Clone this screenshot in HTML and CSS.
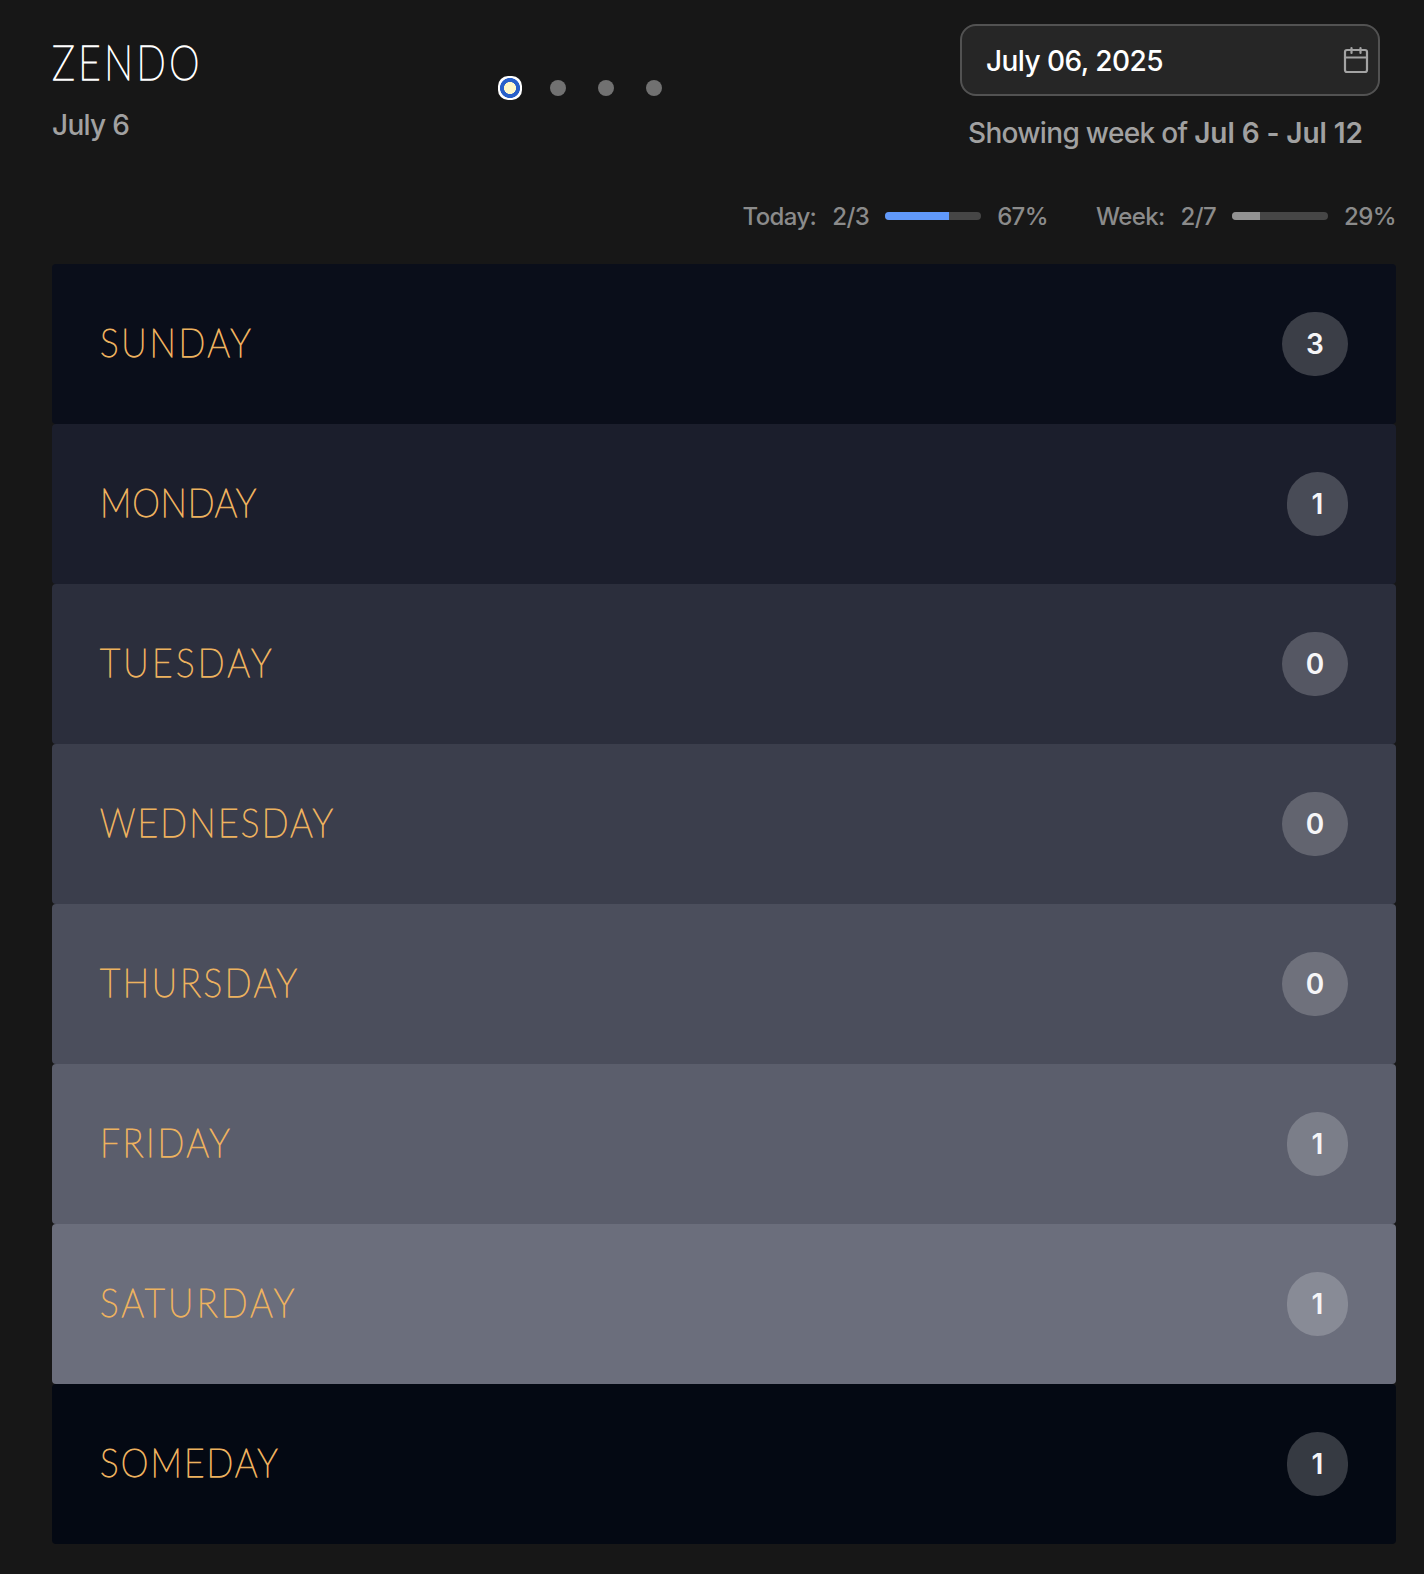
FILE: index.html
```html
<!DOCTYPE html>
<html lang="en">
<head>
<meta charset="utf-8">
<title>Zendo</title>
<link rel="stylesheet" href="styles.css">
</head>
<body>
<div class="app">
  <header class="header">
    <div class="brand">
      <h1 class="logo">ZENDO</h1>
      <p class="date">July 6</p>
    </div>
    <nav class="dots">
      <span class="dot dot-active"></span><span class="dot"></span><span class="dot"></span><span class="dot"></span>
    </nav>
    <div class="picker">
      <div class="field">
        <span>July 06, 2025</span>
        <svg width="28" height="28" viewBox="0 0 28 28" fill="none" stroke="#a3a3a3" stroke-width="2.2" stroke-linecap="round" stroke-linejoin="round"><rect x="3" y="4" width="22" height="22" rx="2"/><path d="M3 11.5h22M9.5 2v5M18.5 2v5"/></svg>
      </div>
      <p class="range">Showing week of <b>Jul 6 - Jul 12</b></p>
    </div>
  </header>
  <section class="stats">
    <div class="stat"><span>Today:</span><span>2/3</span><div class="bar"><div class="fill fill-today" style="width:67%"></div></div><span>67%</span></div>
    <div class="stat"><span>Week:</span><span>2/7</span><div class="bar"><div class="fill" style="width:29%"></div></div><span>29%</span></div>
  </section>
  <main class="days">
    <div class="day sunday"><h2>SUNDAY</h2><span class="count">3</span></div>
    <div class="day monday"><h2>MONDAY</h2><span class="count">1</span></div>
    <div class="day tuesday"><h2>TUESDAY</h2><span class="count">0</span></div>
    <div class="day wednesday"><h2>WEDNESDAY</h2><span class="count">0</span></div>
    <div class="day thursday"><h2>THURSDAY</h2><span class="count">0</span></div>
    <div class="day friday"><h2>FRIDAY</h2><span class="count">1</span></div>
    <div class="day saturday"><h2>SATURDAY</h2><span class="count">1</span></div>
    <div class="day someday"><h2>SOMEDAY</h2><span class="count">1</span></div>
  </main>
</div>
</body>
</html>
```
FILE: styles.css
```css
* { box-sizing: border-box; margin: 0; padding: 0; }
body { background: #171717; color: #fff; font-family: Inter, "Liberation Sans", sans-serif; }
.app { padding: 24px 28px 30px 52px; }
.header { display: flex; height: 168px; }
.brand { width: 446px; padding-top: 10px; }
.logo { width: max-content; font-family: Lato, sans-serif; font-weight: 200; font-size: 48px; line-height: 56px; letter-spacing: 4.4px; -webkit-text-stroke: 1.5px currentColor; transform: scaleX(.8); transform-origin: left; }
.date { font-size: 28px; line-height: 40px; letter-spacing: -.7px; color: #a1a1a1; margin-top: 15px; }
.dots { display: flex; gap: 32px; width: 462px; height: 24px; margin-top: 52px; align-items: center; }
.dot { width: 16px; height: 16px; border-radius: 50%; background: #717171; }
.dot-active { width: 24px; height: 24px; margin-right: -4px; border-radius: 10px; background: radial-gradient(circle, #fef7c8 5.7px, #2860ca 6.3px, #2860ca 9.7px, #fff 10.3px); }
.picker { width: 420px; }
.field { display: flex; justify-content: space-between; align-items: center; height: 72px; padding: 0 8px 0 24px; border: 2px solid #525252; border-radius: 16px; background: #262626; font-size: 28px; font-weight: 500; letter-spacing: -.55px; }
.field span { padding-top: 2px; }
.range { margin-top: 17px; padding-left: 8px; font-size: 28px; line-height: 40px; letter-spacing: -.68px; color: #a1a1a1; white-space: nowrap; }
.date, .range, .stats { font-weight: 500; }
.range b { font-weight: 600; letter-spacing: -.08px; }
.stats { display: flex; justify-content: flex-end; gap: 48px; height: 72px; padding-top: 8px; font-size: 24px; line-height: 32px; letter-spacing: -.62px; color: #8b8b8b; }
.stat { display: flex; align-items: center; gap: 16px; height: 32px; }
.stat span { padding-top: 2px; }
.bar { width: 96px; height: 8px; border-radius: 4px; background: #464646; overflow: hidden; }
.fill { height: 100%; background: #929292; }
.fill-today { background: #6099fb; }
.day { display: flex; justify-content: space-between; align-items: center; height: 160px; padding: 0 48px; border-radius: 4px; }
.day h2 { padding-bottom: 4px; font-family: Lato, sans-serif; font-weight: 200; font-size: 40px; line-height: 48px; letter-spacing: 3.1px; color: #edb25f; -webkit-text-stroke: 1.25px currentColor; transform: scaleX(.88); transform-origin: left; }
.count { min-width: 61px; height: 64px; padding: 0 22px; border-radius: 32px; background: rgba(255, 255, 255, .2); color: #f5f5f7; font-size: 28px; font-weight: 600; line-height: 65px; text-align: center; }
.sunday { background: #0a0e1a; }
.monday { background: #1b1e2c; }
.tuesday { background: #2b2e3c; }
.wednesday { background: #3b3e4c; }
.thursday { background: #4b4e5c; }
.friday { background: #5b5e6c; }
.saturday { background: #6b6e7c; }
.someday { background: #040913; }
.sunday .count, .tuesday .count, .wednesday .count, .thursday .count { min-width: 66px; }
.monday h2 { letter-spacing: .9px; }
.tuesday h2 { letter-spacing: 3.8px; }
.wednesday h2 { letter-spacing: 2.6px; }
.thursday h2 { letter-spacing: 3.1px; }
.saturday h2 { letter-spacing: 3.7px; }
.someday h2 { letter-spacing: 2.4px; }
```
